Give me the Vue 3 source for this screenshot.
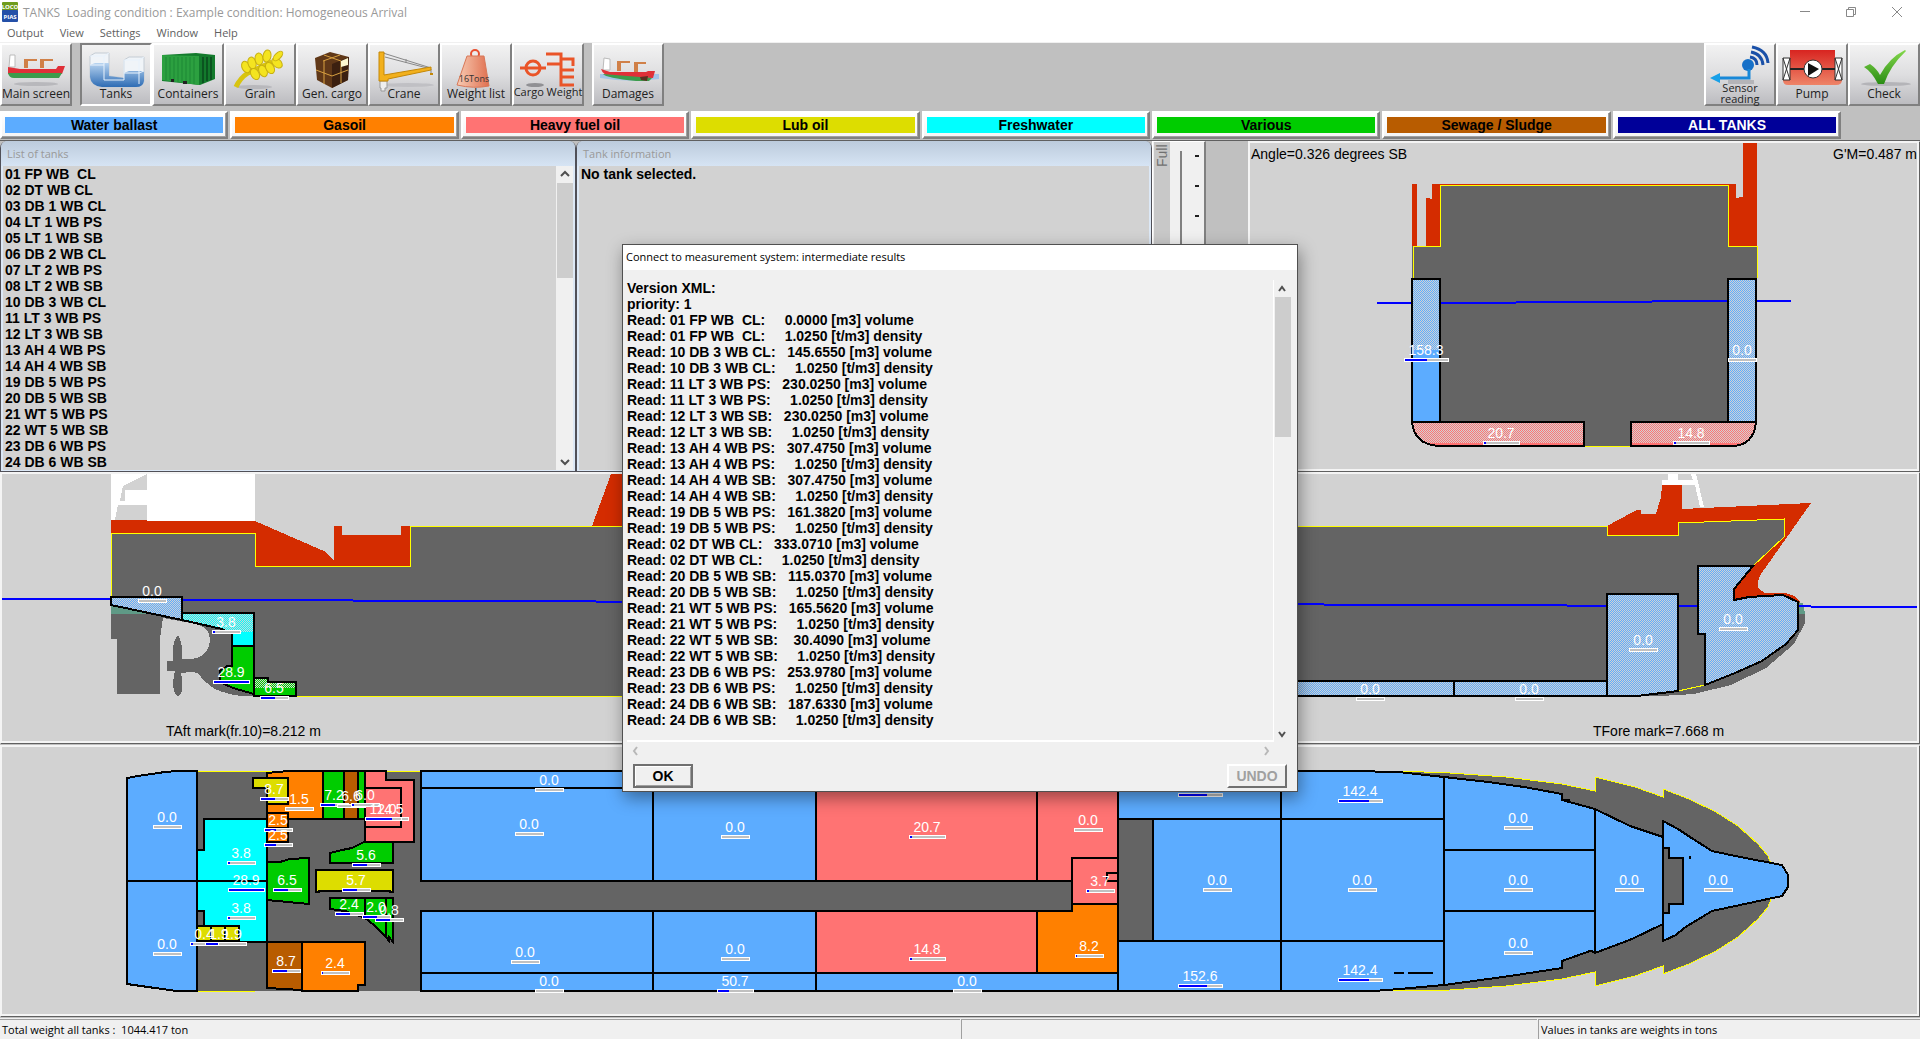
<script setup>
const menus = ['Output', 'View', 'Settings', 'Window', 'Help']

const categories = [
  { name: 'Water ballast', color: '#5cacff' },
  { name: 'Gasoil', color: '#ff8000' },
  { name: 'Heavy fuel oil', color: '#ff7373' },
  { name: 'Lub oil', color: '#dddd00' },
  { name: 'Freshwater', color: '#00ffff' },
  { name: 'Various', color: '#00cc00' },
  { name: 'Sewage / Sludge', color: '#b85c00' },
  { name: 'ALL TANKS', color: '#000099', light: true },
]

const tanks = [
  '01 FP WB  CL', '02 DT WB CL', '03 DB 1 WB CL', '04 LT 1 WB PS', '05 LT 1 WB SB',
  '06 DB 2 WB CL', '07 LT 2 WB PS', '08 LT 2 WB SB', '10 DB 3 WB CL', '11 LT 3 WB PS',
  '12 LT 3 WB SB', '13 AH 4 WB PS', '14 AH 4 WB SB', '19 DB 5 WB PS', '20 DB 5 WB SB',
  '21 WT 5 WB PS', '22 WT 5 WB SB', '23 DB 6 WB PS', '24 DB 6 WB SB',
]

const readings = [
  ['01 FP WB  CL', '  0.0000'],
  ['10 DB 3 WB CL', '145.6550'],
  ['11 LT 3 WB PS', '230.0250'],
  ['12 LT 3 WB SB', '230.0250'],
  ['13 AH 4 WB PS', '307.4750'],
  ['14 AH 4 WB SB', '307.4750'],
  ['19 DB 5 WB PS', '161.3820'],
  ['02 DT WB CL', '333.0710'],
  ['20 DB 5 WB SB', '115.0370'],
  ['21 WT 5 WB PS', '165.5620'],
  ['22 WT 5 WB SB', ' 30.4090'],
  ['23 DB 6 WB PS', '253.9780'],
  ['24 DB 6 WB SB', '187.6330'],
]
const log = ['Version XML:', 'priority: 1'].concat(
  readings.flatMap(([tank, volume]) => [
    `Read: ${tank}:   ${volume} [m3] volume`,
    `Read: ${tank}:     1.0250 [t/m3] density`,
  ]),
)

const dithers = [
  { id: 'part-blue', color: '#5cacff' },
  { id: 'part-red', color: '#ff7373' },
  { id: 'part-cyan', color: '#00ffff' },
  { id: 'part-green', color: '#00cc00' },
]

// Tank labels: text, centre, baseline and filled share of the gauge.
const gauge = (text, x, y, fill = 0, showText = true) => {
  const width = { 3: 29, 4: 37, 5: 45 }[text.length]
  return { text, x, y, showText, left: Math.round(x - width / 2), width, filled: Math.round((width - 2) * fill) }
}

const crossGauges = [
  gauge('158.3', 1426, 355, 0.5), gauge('0.0', 1742, 355),
  gauge('20.7', 1501, 438, 0.07), gauge('14.8', 1691, 438, 0.07),
]
const sideGauges = [
  gauge('0.0', 152, 597), gauge('3.8', 226, 628, 0.07), gauge('28.9', 231, 678, 1),
  gauge('6.5', 274, 694, 0.5), gauge('0.0', 1370, 695), gauge('0.0', 1529, 695),
  gauge('0.0', 1643, 646), gauge('0.0', 1733, 625),
]
const planGauges = [
  gauge('0.0', 167, 823), gauge('0.0', 167, 950),
  gauge('3.8', 241, 859, 0.07), gauge('28.9', 246, 886, 1), gauge('3.8', 241, 914, 0.07),
  gauge('0.4', 204, 940, 0.07), gauge('1.9', 219, 940, 0.5), gauge('1.9', 232, 940, 0),
  gauge('1.5', 299, 805), gauge('8.7', 274, 795, 0.5),
  gauge('2.5', 278, 826, 0.4), gauge('2.5', 278, 841, 0.4),
  gauge('7.2', 334, 801, 0.5), gauge('6.6', 351, 802, 0), gauge('6.0', 365, 801, 0.07),
  gauge('14.5', 390, 815, 0), gauge('12.0', 383, 815, 0.75),
  gauge('5.6', 366, 861, 0.5), gauge('6.5', 287, 886, 0.5), gauge('5.7', 356, 886, 0.5),
  gauge('2.4', 349, 910, 0.5), gauge('2.0', 376, 913, 0.5), gauge('0.8', 389, 916, 0.5),
  gauge('8.7', 286, 967, 0.5), gauge('2.4', 335, 969, 0.04),
  gauge('0.0', 549, 786), gauge('0.0', 529, 830), gauge('0.0', 525, 958), gauge('0.0', 549, 987),
  gauge('0.0', 735, 833), gauge('0.0', 735, 955), gauge('50.7', 735, 987, 0.3),
  gauge('20.7', 927, 833, 0.07), gauge('14.8', 927, 955, 0.07), gauge('0.0', 967, 987),
  gauge('0.0', 1088, 826), gauge('3.7', 1100, 887, 0.07), gauge('8.2', 1089, 952, 0.05),
  gauge('152.6', 1200, 791, 0.65, false), gauge('152.6', 1200, 982, 0.65),
  gauge('142.4', 1360, 797, 0.7), gauge('142.4', 1360, 976, 0.7),
  gauge('0.0', 1217, 886), gauge('0.0', 1362, 886),
  gauge('0.0', 1518, 824), gauge('0.0', 1518, 886), gauge('0.0', 1518, 949),
  gauge('0.0', 1629, 886), gauge('0.0', 1718, 886),
]

const BLUE = '#5cacff'
const PINK = '#ff7373'
const ORANGE = '#ff8000'
const GREEN = '#00cc00'
const YELLOW = '#dddd00'
const BROWN = '#b85c00'
const CYAN = '#00ffff'
const planTanks = [
  [BLUE, 'M127 779L138 777L165 773L177 772H197V882H127Z'],
  [BLUE, 'M127 882H197V992H177L155 989L127 985Z'],
  [CYAN, 'M204 820H267V882H197V851H204Z'],
  [CYAN, 'M197 882H267V943H204V912H197Z'],
  [YELLOW, 'M197 927H211V942H197Z'],
  [YELLOW, 'M211 927H225V942H211Z'],
  [YELLOW, 'M225 927H239V942H225Z'],
  [ORANGE, 'M267 774L288 772H323V820H267Z'],
  [YELLOW, 'M253 779H288V805H267V789H253Z'],
  [ORANGE, 'M267 814H288V829H267Z'],
  [ORANGE, 'M267 829H288V843H267Z'],
  [GREEN, 'M323 772H344V820H323Z'],
  [BROWN, 'M344 772H358V820H344Z'],
  [GREEN, 'M358 772H365V820H358Z'],
  [PINK, 'M365 772H386V781H414V843H365Z'],
  [PINK, 'M365 789H401V828H365Z'],
  [GREEN, 'M330 854L342 851L352 849L364 843H393V864H330Z'],
  [GREEN, 'M267 863H280L290 860L309 859V905L288 903L267 901Z'],
  [YELLOW, 'M316 871H393V893H390V892H319V893H316Z'],
  [GREEN, 'M330 899H365V919L345 912L330 910Z'],
  [GREEN, 'M365 899H386V938L374 926L365 919Z'],
  [GREEN, 'M386 899H393V943L389 938V942L386 938Z'],
  [BROWN, 'M267 943H302V991L267 989Z'],
  [ORANGE, 'M302 943H365V986H358V992H302Z'],
  [BLUE, 'M421 772H653V789H421Z'],
  [BLUE, 'M421 789H653V882H421Z'],
  [BLUE, 'M421 912H653V974H421Z'],
  [BLUE, 'M421 974H653V992H421Z'],
  [BLUE, 'M653 772H1118V789H653Z'],
  [BLUE, 'M653 789H816V882H653Z'],
  [BLUE, 'M653 912H816V974H653Z'],
  [BLUE, 'M653 974H816V992H653Z'],
  [PINK, 'M816 789H1037V882H816Z'],
  [PINK, 'M816 912H1037V974H816Z'],
  [BLUE, 'M816 974H1118V992H816Z'],
  [PINK, 'M1037 789H1118V859H1072V882H1037Z'],
  [PINK, 'M1072 859H1118V905H1072Z'],
  [ORANGE, 'M1037 912H1072V905H1118V974H1037Z'],
  ['#646464', 'M1118 820H1153V942H1118Z'],
  [BLUE, 'M1118 772H1281V820H1118Z'],
  [BLUE, 'M1118 942H1281V992H1118Z'],
  [BLUE, 'M1153 820H1281V942H1153Z'],
  [BLUE, 'M1281 772H1352L1398 773L1444 778V820H1281Z'],
  [BLUE, 'M1281 820H1444V942H1281Z'],
  [BLUE, 'M1281 942H1444V986L1400 990L1374 992H1281Z'],
  [BLUE, 'M1444 778L1488 783L1524 788L1562 795V801L1595 810V851H1444Z'],
  [BLUE, 'M1444 851H1595V912H1444Z'],
  [BLUE, 'M1444 912H1595V953L1590 952L1562 962V969L1510 977L1444 986Z'],
  [BLUE, 'M1595 810L1630 827L1663 838V925L1632 940L1595 954Z'],
  [BLUE, 'M1663 822L1678 830L1690 838L1712 852L1740 858L1782 866L1788 876V888L1782 897L1740 906L1712 912L1684 929L1676 936L1663 942V914H1669V905H1683V859H1669V849H1663Z'],
]
</script>

<template>
  <div class="window">
    <header class="titlebar">
      <svg class="app-icon" viewBox="0 0 16 20" aria-hidden="true">
        <rect width="16" height="9" rx="1" fill="#6f9c1c" />
        <rect y="8" width="16" height="12" rx="1" fill="#2450a8" />
        <text x="8" y="7" class="logo">LOCO</text>
        <text x="8" y="17" class="logo">PIAS</text>
      </svg>
      <h1>TANKS&nbsp; Loading condition : Example condition: Homogeneous Arrival</h1>
      <div class="window-buttons">
        <button type="button" aria-label="Minimize">
          <svg viewBox="0 0 24 24"><path d="M2 11H22" /></svg>
        </button>
        <button type="button" aria-label="Restore">
          <svg viewBox="0 0 24 24"><path d="M3 7H17V21H3ZM7 7V3H21V17H17" /></svg>
        </button>
        <button type="button" aria-label="Close">
          <svg viewBox="0 0 24 24"><path d="M2 2L22 22M22 2L2 22" /></svg>
        </button>
      </div>
    </header>

    <nav class="menubar">
      <button v-for="menu in menus" :key="menu" type="button">{{ menu }}</button>
    </nav>

    <div class="toolbar">
      <button type="button" class="tool">
        <svg viewBox="0 0 68 60" aria-hidden="true">
          <ellipse cx="34" cy="39" rx="22" ry="2" fill="#b8b8bc" />
          <path d="M8 10H13V22H7Z" fill="#fff" stroke="#bbb" />
          <path d="M23 23V15H35M25 15V23M39 23V15H51M41 15V23" fill="none" stroke="#d08048" stroke-width="2" />
          <path d="M6 22L18 24H54L56 21H63L60 29H6Z" fill="#e03038" />
          <path d="M6 28H60L57 33H12Q7 33 6 28Z" fill="#3c9c4c" />
        </svg>
        <span>Main screen</span>
      </button>
      <button type="button" class="tool pressed spaced">
        <svg viewBox="0 0 68 60" aria-hidden="true">
          <defs>
            <linearGradient id="water" x1="0" y1="0" x2="0" y2="1">
              <stop offset="0" stop-color="#b8d4f0" /><stop offset="1" stop-color="#2e6cb4" />
            </linearGradient>
          </defs>
          <path d="M8 11L13 8H27V31L42 33V15L47 12H62V36Q61 42 54 42H20Q9 41 8 32Z" fill="#f0f4f8" stroke="#c4ccd4" />
          <path d="M8 20L13 18H27V31L42 33V28L47 26H62V36Q61 42 54 42H20Q9 41 8 32Z" fill="url(#water)" />
          <path d="M8 11H22V35H42V15H57L62 12M22 11L27 8M8 20H22M42 28H57L62 26M57 15V39" fill="none" stroke="#e8f2fc" />
        </svg>
        <span>Tanks</span>
      </button>
      <button type="button" class="tool">
        <svg viewBox="0 0 68 60" aria-hidden="true">
          <path d="M8 10L42 8L61 10V34L46 40L8 36Z" fill="#137a2c" />
          <path d="M8 10L45 11V40L8 35Z" fill="#2ca040" />
          <path d="M12 12V35M16 12V35M20 12V36M24 12V37M28 12V37M32 12V38M36 12V38M40 12V39" stroke="#1c8834" />
          <path d="M49 12V38M53 12V36M57 12V35" stroke="#0b5420" stroke-width="2" />
          <path d="M17 34H20V37H17ZM29 36H33V39H29Z" fill="#222" />
        </svg>
        <span>Containers</span>
      </button>
      <button type="button" class="tool">
        <svg viewBox="0 0 68 60" aria-hidden="true">
          <ellipse cx="28" cy="42" rx="18" ry="2" fill="#b8b8bc" />
          <path d="M10 42Q14 33 22 28L46 17" fill="none" stroke="#d8c410" stroke-width="5" />
          <g fill="#f4e420" stroke="#c8b010">
            <ellipse cx="20" cy="22" rx="4" ry="6" transform="rotate(-25 20 22)" />
            <ellipse cx="26" cy="18" rx="4" ry="6" transform="rotate(-15 26 18)" />
            <ellipse cx="33" cy="14" rx="4" ry="6" transform="rotate(-5 33 14)" />
            <ellipse cx="41" cy="11" rx="4" ry="6" transform="rotate(10 41 11)" />
            <ellipse cx="29" cy="29" rx="4" ry="6" transform="rotate(-30 29 29)" />
            <ellipse cx="37" cy="26" rx="4" ry="6" transform="rotate(-25 37 26)" />
            <ellipse cx="44" cy="23" rx="4" ry="6" transform="rotate(-30 44 23)" />
            <ellipse cx="51" cy="18" rx="4" ry="6" transform="rotate(-50 51 18)" />
            <ellipse cx="52" cy="11" rx="6" ry="3" transform="rotate(-45 52 11)" />
          </g>
        </svg>
        <span>Grain</span>
      </button>
      <button type="button" class="tool">
        <svg viewBox="0 0 68 60" aria-hidden="true">
          <path d="M17 13L32 7L51 12L50 35L34 43L19 35Z" fill="#603818" />
          <path d="M34 19L51 12L50 35L34 43Z" fill="#3c2010" />
          <path d="M25 16L42 10M26 10L43 16M26 16V39M43 16V38M18 25L34 31L50 25" fill="none" stroke="#d8a040" />
          <path d="M43 16L50 13V20L43 22Z" fill="#fff8d0" />
        </svg>
        <span>Gen. cargo</span>
      </button>
      <button type="button" class="tool">
        <svg viewBox="0 0 68 60" aria-hidden="true">
          <ellipse cx="38" cy="40" rx="26" ry="2" fill="#c0c0c4" />
          <path d="M10 36H17V43H15V46H11V43H10Z" fill="#eee" stroke="#999" />
          <path d="M13 8L61 23M15 12L61 24M36 14V18M61 24V30" fill="none" stroke="#888" />
          <path d="M9 7H14V30L61 22V25L18 34V36H9Z" fill="#f2b01c" stroke="#c48808" />
          <path d="M60 29H63" stroke="#c48808" stroke-width="2" />
        </svg>
        <span>Crane</span>
      </button>
      <button type="button" class="tool">
        <svg viewBox="0 0 68 60" aria-hidden="true">
          <defs>
            <linearGradient id="weight" x1="0" y1="0" x2="1" y2="0">
              <stop offset="0" stop-color="#f8ccb4" /><stop offset="1" stop-color="#e07050" />
            </linearGradient>
          </defs>
          <circle cx="33" cy="9" r="4" fill="none" stroke="#e85030" stroke-width="2" />
          <path d="M25 11H42L47 41Q32 44 15 40Z" fill="url(#weight)" stroke="#d87858" />
          <text x="32" y="37" class="tons">16Tons</text>
        </svg>
        <span>Weight list</span>
      </button>
      <button type="button" class="tool">
        <svg viewBox="0 0 68 60" aria-hidden="true">
          <ellipse cx="21" cy="40" rx="9" ry="2" fill="#909094" />
          <path d="M6 23H32" stroke="#ea5428" stroke-width="3" />
          <circle cx="19" cy="23" r="7" fill="none" stroke="#ea5428" stroke-width="3" />
          <path d="M32 9H47V40H60M33 19H47M47 14H59V21M47 25H60M47 32H60" fill="none" stroke="#ea5428" stroke-width="3" />
        </svg>
        <span class="small">Cargo Weight</span>
      </button>
      <button type="button" class="tool spaced">
        <svg viewBox="0 0 68 60" aria-hidden="true">
          <path d="M6 29H65V34Q36 38 6 33Z" fill="#a4c4e8" />
          <path d="M10 13L16 14V25H9Z" fill="#fff" stroke="#bbb" />
          <path d="M24 26V17H36M26 17V26M41 28V18H52M43 18V28" fill="none" stroke="#d08048" stroke-width="2" />
          <path d="M7 24L16 27H52L54 26H61L59 33L20 32Q9 31 7 24Z" fill="#e03038" />
          <path d="M9 29L58 33L55 36L42 36Q12 33 9 29Z" fill="#3c9c4c" />
          <path d="M46 32L54 31L53 36L47 35Z" fill="#5c3020" />
        </svg>
        <span>Damages</span>
      </button>

      <div class="spring"></div>

      <button type="button" class="tool">
        <svg viewBox="0 0 68 60" aria-hidden="true">
          <path d="M22 37H48" stroke="#b4b4b8" stroke-width="4" />
          <circle cx="42" cy="20" r="6" fill="#1670c8" />
          <path d="M43 24V33H13" fill="none" stroke="#1888d8" stroke-width="3" />
          <path d="M4 33L14 28V38Z" fill="#18a0e8" />
          <path d="M44 12Q51 13 51 20M45 7Q56 9 57 20M46 2Q61 5 62 18" fill="none" stroke="#1a50a8" stroke-width="3" />
        </svg>
        <span class="tight">Sensor<br />reading</span>
      </button>
      <button type="button" class="tool">
        <svg viewBox="0 0 68 60" aria-hidden="true">
          <defs>
            <linearGradient id="pump" x1="0" y1="0" x2="0" y2="1">
              <stop offset="0" stop-color="#d82420" /><stop offset="1" stop-color="#ee8468" />
            </linearGradient>
          </defs>
          <path d="M12 5H57V32H64V35Q64 40 58 40H10Q5 40 5 35V32H12Z" fill="url(#pump)" />
          <path d="M5 13H12V35H5ZL12 35M12 13L5 35M57 13H64V35H57ZL64 35M64 13L57 35" fill="#fff" stroke="#333" />
          <path d="M12 24H57" stroke="#222" stroke-width="2" />
          <circle cx="35" cy="24" r="9" fill="#fff" stroke="#333" />
          <path d="M30 18L41 24L30 31Z" fill="#111" />
        </svg>
        <span>Pump</span>
      </button>
      <button type="button" class="tool">
        <svg viewBox="0 0 68 60" aria-hidden="true">
          <defs>
            <linearGradient id="tick" x1="0" y1="0" x2="0" y2="1">
              <stop offset="0" stop-color="#84d84c" /><stop offset="1" stop-color="#2a8c14" />
            </linearGradient>
          </defs>
          <ellipse cx="36" cy="39" rx="25" ry="2" fill="#b4b4b8" />
          <path d="M14 22L20 19Q27 24 30 30Q39 13 55 5L56 6Q40 21 34 39L28 39Q22 27 14 22Z" fill="url(#tick)" />
        </svg>
        <span>Check</span>
      </button>
    </div>

    <div class="categories">
      <button
        v-for="category in categories"
        :key="category.name"
        type="button"
        :class="{ light: category.light }"
      >
        <span :style="{ background: category.color }">{{ category.name }}</span>
      </button>
    </div>

    <main>
      <div class="upper">
        <section class="pane">
          <h2>List of tanks</h2>
          <div class="pane-body">
            <ul>
              <li v-for="tank in tanks" :key="tank">{{ tank }}</li>
            </ul>
            <div class="scrollbar">
              <svg viewBox="0 0 17 17"><path d="M5 10L9 6L13 10" /></svg>
              <div class="thumb"></div>
              <svg class="last" viewBox="0 0 17 17"><path d="M5 7L9 11L13 7" /></svg>
            </div>
          </div>
        </section>

        <section class="pane">
          <h2>Tank information</h2>
          <div class="pane-body"><p>No tank selected.</p></div>
        </section>

        <div class="level">
          <span class="level-name">Full</span>
          <div class="groove"></div>
          <div class="ticks"><i v-for="n in 10" :key="n"></i></div>
        </div>

        <div class="canvas cross">
          <svg viewBox="1250 143 667 326" role="img" aria-label="Cross section">
            <defs>
              <pattern
                v-for="dither in dithers"
                :id="dither.id"
                :key="dither.id"
                width="2"
                height="2"
                patternUnits="userSpaceOnUse"
              >
                <rect width="2" height="2" fill="#d2d2d2" />
                <rect width="1" height="1" :fill="dither.color" />
                <rect x="1" y="1" width="1" height="1" :fill="dither.color" />
              </pattern>
            </defs>
            <g class="crisp">
              <path class="hull" d="M1440 185H1728V246H1757V422Q1754 446 1731 446H1438Q1413 443 1412 422V246H1440Z" />
              <path class="red" d="M1412 184H1417V246H1412ZM1426 198H1430V199H1432V184H1736V198H1739V197H1743V143H1757V246H1728V186H1440V246H1426Z" />
              <path class="edge" d="M1413 278V246H1440V185H1728V246H1757V278M1585 446H1630" />
              <path class="sea" d="M1377 303H1516M1516 302H1652M1652 301H1791" />
              <path fill="url(#part-blue)" d="M1412 279H1440V350H1412Z" />
              <path fill="#5cacff" d="M1412 350H1440V422H1412Z" />
              <path class="frame" d="M1412 279H1440V422H1412Z" />
              <path class="frame" fill="url(#part-blue)" d="M1728 279H1756V422H1728Z" />
              <path fill="url(#part-red)" d="M1412 422H1584V446H1438Q1414 444 1412 422ZM1631 422H1756Q1754 446 1731 446H1631Z" />
              <path fill="#ff7373" d="M1428 443H1584V446H1434ZM1631 443H1742L1734 446H1631Z" />
              <path class="frame" d="M1412 422H1584V446H1438Q1414 444 1412 422ZM1631 422H1756Q1754 446 1731 446H1631Z" />
            </g>
            <g v-for="(g, i) in crossGauges" :key="i">
              <text class="value" :x="g.x" :y="g.y">{{ g.text }}</text>
              <rect :x="g.left" :y="g.y + 3" :width="g.width" height="4" fill="#fff" />
              <rect :x="g.left + 1" :y="g.y + 4" :width="g.width - 2" height="2" fill="#c0c0c0" />
              <rect :x="g.left + 1" :y="g.y + 4" :width="g.filled" height="2" fill="#0000ff" />
            </g>
            <text class="note" x="1251" y="159">Angle=0.326 degrees SB</text>
            <text class="note end" x="1917" y="159">G'M=0.487 m</text>
          </svg>
        </div>
      </div>

      <div class="canvas">
        <svg viewBox="2 475 1915 267" role="img" aria-label="Side view">
          <g class="crisp">
            <path class="white" d="M111 475H255V523H111Z" />
            <path fill="#d2d2d2" d="M147 475L123 487L120 502H125V491H147ZM118 506H147V521H115Z" />
            <path class="hull" d="M111 534H255V567H410V527H1607V536H1678V524L1784 520V538L1753 567L1734 590V601L1785 594L1802 605L1805 615V624L1794 645L1766 669L1731 686L1694 695L1660 697H241Q226 695 215 690Q206 684 201 678Q197 672 190 673L181 674Q183 684 182 692Q178 702 174 692Q172 682 175 672H167V662H173V648Q178 626 182 648V660Q196 662 205 654Q212 644 209 636Q208 628 196 625L163 619L160 640V695H117V640H111V606Z" />
            <path fill="#5f9a86" d="M111 606L150 615H111ZM1799 604H1803L1805 615H1799Z" />
            <path class="red" d="M111 521H147V522H255L326 553L334 562V527H342V536H401V527H410V567H255V534H111ZM592 527L611 475H660V527Z" />
            <path class="red" d="M1607 527L1633 513L1637 511H1641V515H1656L1661 498L1662 486H1682V510L1811 504L1761 575L1758 582V589L1765 594H1785L1794 597L1802 604L1798 602L1783 596L1749 598L1734 601V590L1753 567L1784 538V520L1678 524V536H1607Z" />
            <path class="white" d="M1662 481H1668V475H1678V481H1693L1691 475H1696L1704 508H1700L1695 486H1662Z" />
            <path class="edge" d="M111 598V534H255V567H410V527H1607V536H1678V524L1784 520V538L1753 567M254 697H1300M1678 692L1705 686" />
            <path class="sea" d="M2 600H111M182 601H353M353 602H596M596 603H860M860 604H1100M1100 605H1324M1324 606H1567M1567 607H1811M1811 608H1917" />
            <path class="frame" fill="url(#part-blue)" d="M111 598H182V621L111 606Z" />
            <path fill="url(#part-cyan)" d="M182 614H254V633H232L222 630L182 621Z" />
            <path fill="#0ff" d="M232 633H254V647H232Z" />
            <path class="frame" d="M182 614H254V647H232V635L222 630L182 621Z" />
            <path class="frame" fill="#00cc00" d="M232 647H254V695L233 689L220 683V672L227 667H232Z" />
            <path fill="url(#part-green)" d="M254 679H268V683H296V689H254Z" />
            <path fill="#00cc00" d="M254 689H296V697H254Z" />
            <path class="frame" d="M254 679H268V683H296V697H254Z" />
            <path class="frame" fill="url(#part-blue)" d="M1200 682H1454V697H1200ZM1454 682H1607V697H1454Z" />
            <path class="frame" fill="url(#part-blue)" d="M1607 595H1678V692L1637 697H1607Z" />
            <path class="frame" fill="url(#part-blue)" d="M1698 567H1753L1734 590V601L1749 598L1783 596L1798 603V631L1786 645L1762 662L1735 674L1705 686V635H1698Z" />
          </g>
          <g v-for="(g, i) in sideGauges" :key="i">
            <text class="value" :x="g.x" :y="g.y">{{ g.text }}</text>
            <rect :x="g.left" :y="g.y + 3" :width="g.width" height="4" fill="#fff" />
            <rect :x="g.left + 1" :y="g.y + 4" :width="g.width - 2" height="2" fill="#c0c0c0" />
            <rect :x="g.left + 1" :y="g.y + 4" :width="g.filled" height="2" fill="#0000ff" />
          </g>
          <text class="note" x="166" y="737">TAft mark(fr.10)=8.212 m</text>
          <text class="note" x="1593" y="737">TFore mark=7.668 m</text>
        </svg>
      </div>

      <div class="canvas">
        <svg viewBox="2 748 1915 267" role="img" aria-label="Plan view">
          <g class="crisp">
            <path class="hull deck" d="M190 772H1398L1450 774L1506 778L1562 785L1595 792V778L1635 788L1663 798V790L1689 800L1716 813L1738 827L1758 845L1768 857L1771 865V900L1768 908L1758 920L1738 938L1716 952L1689 965L1663 975V967L1635 977L1595 987V973L1562 980L1506 987L1450 991L1374 992H190Z" />
            <path v-for="([color, d], i) in planTanks" :key="i" class="frame" :fill="color" :d="d" />
            <path class="frame" d="M1118 874H1107V882H1118M1394 974H1404M1408 974H1433M1562 801H1570M1663 838V925" />
            <path d="M1689 857H1691V860H1689Z" />
          </g>
          <g v-for="(g, i) in planGauges" :key="i">
            <text v-if="g.showText" class="value" :x="g.x" :y="g.y">{{ g.text }}</text>
            <rect :x="g.left" :y="g.y + 3" :width="g.width" height="4" fill="#fff" />
            <rect :x="g.left + 1" :y="g.y + 4" :width="g.width - 2" height="2" fill="#c0c0c0" />
            <rect :x="g.left + 1" :y="g.y + 4" :width="g.filled" height="2" fill="#0000ff" />
          </g>
        </svg>
      </div>
    </main>

    <footer>
      <span>Total weight all tanks :&nbsp; 1044.417 ton</span>
      <span></span>
      <span>Values in tanks are weights in tons</span>
    </footer>

    <section class="dialog" role="dialog" aria-labelledby="dialog-title">
      <h2 id="dialog-title">Connect to measurement system: intermediate results</h2>
      <div class="dialog-body">
        <pre>{{ log.join('\n') }}</pre>
        <div class="scrollbar">
          <svg viewBox="0 0 17 17"><path d="M5 11L8 7L11 11" /></svg>
          <div class="thumb"></div>
          <svg class="last" viewBox="0 0 17 17"><path d="M5 7L8 11L11 7" /></svg>
        </div>
      </div>
      <div class="hscroll">
        <svg viewBox="0 0 17 17"><path d="M10 5L7 9L10 13" /></svg>
        <svg viewBox="0 0 17 17"><path d="M7 5L10 9L7 13" /></svg>
      </div>
      <div class="actions">
        <button type="button" class="default">OK</button>
        <button type="button" disabled>UNDO</button>
      </div>
    </section>
  </div>
</template>

<style>
body {
  margin: 0;
}
</style>

<style scoped>
.window {
  position: relative;
  display: flex;
  flex-direction: column;
  min-height: 100vh;
  background: #c0c0c0;
  color: #000;
  font-family: "Open Sans", "Noto Sans", sans-serif;
  font-size: 11px;
}
button {
  padding: 0;
  border: 0;
  background: none;
  color: inherit;
  font: inherit;
}
h1,
h2,
ul,
p,
pre {
  margin: 0;
  padding: 0;
  font: inherit;
}
ul {
  list-style: none;
}
svg {
  display: block;
}

.titlebar {
  display: flex;
  align-items: center;
  gap: 5px;
  height: 24px;
  padding-left: 2px;
  background: #fff;
  color: #999;
}
.titlebar h1 {
  font-size: 12px;
}
.app-icon {
  width: 16px;
  height: 20px;
}
.logo {
  fill: #fff;
  font-size: 6px;
  font-weight: bold;
  text-anchor: middle;
}
.window-buttons {
  display: flex;
  margin-left: auto;
}
.window-buttons button {
  display: grid;
  place-items: center;
  width: 46px;
  height: 22px;
}
.window-buttons svg {
  width: 12px;
  fill: none;
  stroke: #888;
  stroke-width: 2;
}

.menubar {
  display: flex;
  gap: 16px;
  height: 18px;
  padding-left: 7px;
  border-bottom: 1px solid #f0f0f0;
  background: #fff;
  color: #606060;
  line-height: 18px;
}

.toolbar {
  display: flex;
  height: 63px;
}
.spring {
  flex: 1;
}
.tool {
  position: relative;
  box-sizing: border-box;
  width: 72px;
  border: 2px solid;
  border-color: #fff #808080 #808080 #fff;
  background: linear-gradient(#f2f2f2, #dedee0 50%, #bcbcc0);
  color: #222;
  font-size: 12px;
}
.tool.pressed {
  border-color: #808080 #fff #fff #808080;
}
.tool.spaced {
  margin-left: 8px;
}
.tool svg {
  width: 68px;
  height: 60px;
}
.tool span {
  position: absolute;
  right: -2px;
  bottom: 2px;
  left: -2px;
  line-height: 16px;
}
.tool .small {
  bottom: 4px;
  font-size: 11px;
}
.tool .tight {
  bottom: 0;
  font-size: 11px;
  line-height: 11px;
}
.tons {
  fill: #333;
  font-size: 9px;
  text-anchor: middle;
}

.categories {
  display: flex;
  width: 96%;
  padding: 5px 0 1px;
}
.categories button {
  flex: 1;
  box-sizing: border-box;
  height: 28px;
  margin-right: 2px;
  padding: 3px;
  border: 2px solid;
  border-color: #fff #808080 #808080 #fff;
  background: linear-gradient(#fff, #f4f4f4);
  box-shadow: inset -1px -1px 0 #a0a0a0;
  font: bold 14px/16px "Liberation Sans", Arial, sans-serif;
}
.categories span {
  display: block;
  height: 16px;
}
.categories .light {
  color: #fff;
}

main {
  display: flex;
  flex-direction: column;
}
.upper {
  display: flex;
  border-top: 1px solid #606060;
}
.pane {
  display: flex;
  flex-direction: column;
  box-sizing: border-box;
  width: 30%;
  border: 1px solid #505058;
  border-top: 0;
  border-radius: 7px 7px 0 0;
  background: #d2d2d2;
  box-shadow: inset 2px 0 #dce8f6, inset -2px -1px #dce8f6;
}
.pane h2 {
  height: 25px;
  padding-left: 6px;
  border-radius: 6px 6px 0 0;
  background: linear-gradient(#bccbdc, #d6e4f4);
  color: #999;
  line-height: 26px;
}
.pane-body {
  display: flex;
  flex: 1;
  justify-content: space-between;
  padding: 0 2px 1px 4px;
  font: bold 14px/16px "Liberation Sans", Arial, sans-serif;
  white-space: pre;
}
.scrollbar {
  display: flex;
  flex-direction: column;
  width: 17px;
  background: #f0f0f0;
}
.scrollbar svg,
.hscroll svg {
  width: 17px;
  height: 17px;
  fill: none;
  stroke: #505050;
  stroke-width: 2;
}
.thumb {
  height: 95px;
  margin-left: 1px;
  background: #cdcdcd;
}
.last {
  margin-top: auto;
}

.level {
  display: flex;
  box-sizing: border-box;
  width: 54px;
  margin-right: 42px;
  padding-left: 1px;
  border: 1px solid #fff;
  border-right: 2px solid #808080;
  background: #f0f0f0;
}
.level-name {
  width: 16px;
  padding-bottom: 2px;
  background: #c8c8c8;
  color: #707070;
  font: 14px/16px "Liberation Sans", Arial, sans-serif;
  text-align: right;
  transform: rotate(180deg);
  writing-mode: vertical-rl;
}
.groove {
  width: 1px;
  margin: 9px 0 9px 10px;
  border-left: 2px solid #808080;
}
.ticks {
  display: flex;
  flex-direction: column;
  gap: 28px;
  margin: 13px 0 0 12px;
}
.ticks i {
  width: 4px;
  height: 2px;
  background: #202020;
}

.canvas {
  margin: 0 1px 1px 0;
  border: 2px solid #f4f4f4;
  background: #d2d2d2;
  box-shadow: 1px 1px #606060;
}
.canvas + .canvas {
  margin-top: 1px;
}
.cross {
  flex: 1;
}
.crisp {
  shape-rendering: crispEdges;
}
.hull {
  fill: #646464;
}
.deck {
  stroke: #ff0;
}
.red {
  fill: #d42c00;
}
.white {
  fill: #fff;
}
.edge {
  fill: none;
  stroke: #ff0;
}
.sea {
  fill: none;
  stroke: #0000ff;
  stroke-width: 2;
}
.frame {
  stroke: #000;
  stroke-width: 2;
}
.frame:not([fill]) {
  fill: none;
}
.value,
.note {
  font: 14px "Liberation Sans", Arial, sans-serif;
}
.value {
  fill: #fff;
  text-anchor: middle;
}
.end {
  text-anchor: end;
}

footer {
  display: flex;
  gap: 1px;
  height: 20px;
  margin-top: auto;
  padding-top: 1px;
  border-bottom: 1px solid #fff;
  background: #f0f0f0;
  line-height: 20px;
}
footer span {
  box-sizing: border-box;
  width: 30%;
  padding-left: 2px;
  border-top: 1px solid #a0a0a0;
  border-left: 1px solid #a0a0a0;
}
footer span:first-child {
  width: 50%;
  border-left: 0;
}
footer span:last-child {
  flex: 1;
}

.dialog {
  position: absolute;
  top: 244px;
  left: 50%;
  box-sizing: border-box;
  width: 676px;
  border: 1px solid #505050;
  background: #f0f0f0;
  box-shadow: 2px 6px 16px rgba(0, 0, 0, 0.4);
  transform: translateX(-50%);
}
.dialog h2 {
  height: 25px;
  padding-left: 3px;
  background: #fff;
  line-height: 23px;
}
.dialog-body {
  display: flex;
  justify-content: space-between;
  margin: 10px 6px 0 4px;
}
.dialog pre {
  flex: 1;
  box-sizing: border-box;
  height: 462px;
  border-right: 1px solid #fff;
  border-bottom: 2px solid #fff;
  font: bold 14px/16px "Liberation Sans", Arial, sans-serif;
}
.dialog .scrollbar .thumb {
  height: 140px;
}
.hscroll {
  display: flex;
  justify-content: space-between;
  padding: 0 22px 0 4px;
}
.hscroll svg {
  stroke: #b8b8b8;
}
.actions {
  display: flex;
  justify-content: space-between;
  padding: 5px 10px 3px;
}
.actions button {
  box-sizing: border-box;
  width: 60px;
  height: 24px;
  border: 2px solid;
  border-color: #fff #707070 #707070 #fff;
  font: bold 14px/18px "Liberation Sans", Arial, sans-serif;
}
.actions .default {
  border-color: #707070;
  box-shadow: inset 1px 1px #fff, inset -1px -1px #a0a0a0;
}
.actions button:disabled {
  color: #a0a0a0;
}
</style>
